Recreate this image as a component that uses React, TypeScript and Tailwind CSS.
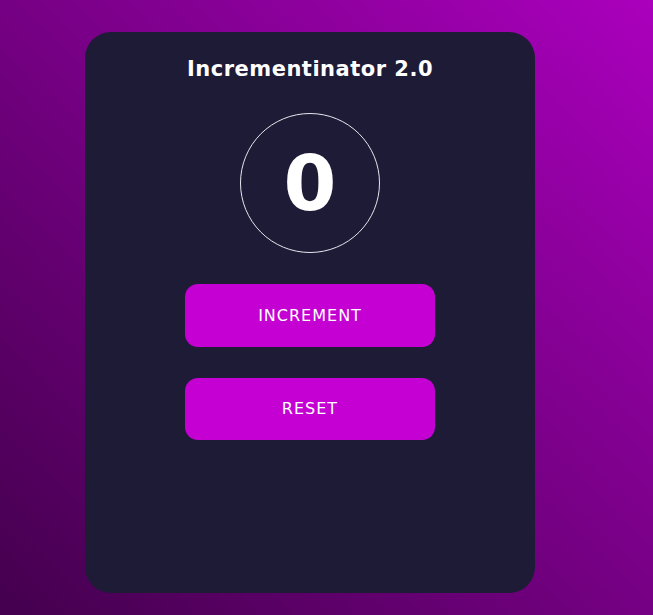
import { useState } from 'react';

export default function App() {
  const [count, setCount] = useState(0);

  return (
    <div className="min-h-[615px] w-full bg-gradient-to-tr from-[#44004e] to-[#ab00bd] pt-[32px] pl-[85px] pb-[22px] font-['DejaVu_Sans',sans-serif]">
      <div className="w-[450px] h-[561px] rounded-[26px] bg-[#1e1b37] flex flex-col items-center pt-[23px]">
        <h1 className="text-[21px] leading-[28px] font-bold text-white tracking-[0.5px]">Incrementinator 2.0</h1>

        <div className="mt-[30px] w-[140px] h-[140px] rounded-full border border-[#e6e6ee] flex items-center justify-center">
          <span className="text-[76px] leading-none font-bold text-white translate-y-[1px]">{count}</span>
        </div>

        <button
          onClick={() => setCount(count + 1)}
          className="mt-[31px] w-[250px] h-[63px] rounded-[13px] bg-[#c400d3] text-white text-[16px] tracking-[1px] uppercase"
        >
          Increment
        </button>

        <button
          onClick={() => setCount(0)}
          className="mt-[31px] w-[250px] h-[62px] rounded-[13px] bg-[#c400d3] text-white text-[16px] tracking-[1px] uppercase"
        >
          Reset
        </button>
      </div>
    </div>
  );
}
